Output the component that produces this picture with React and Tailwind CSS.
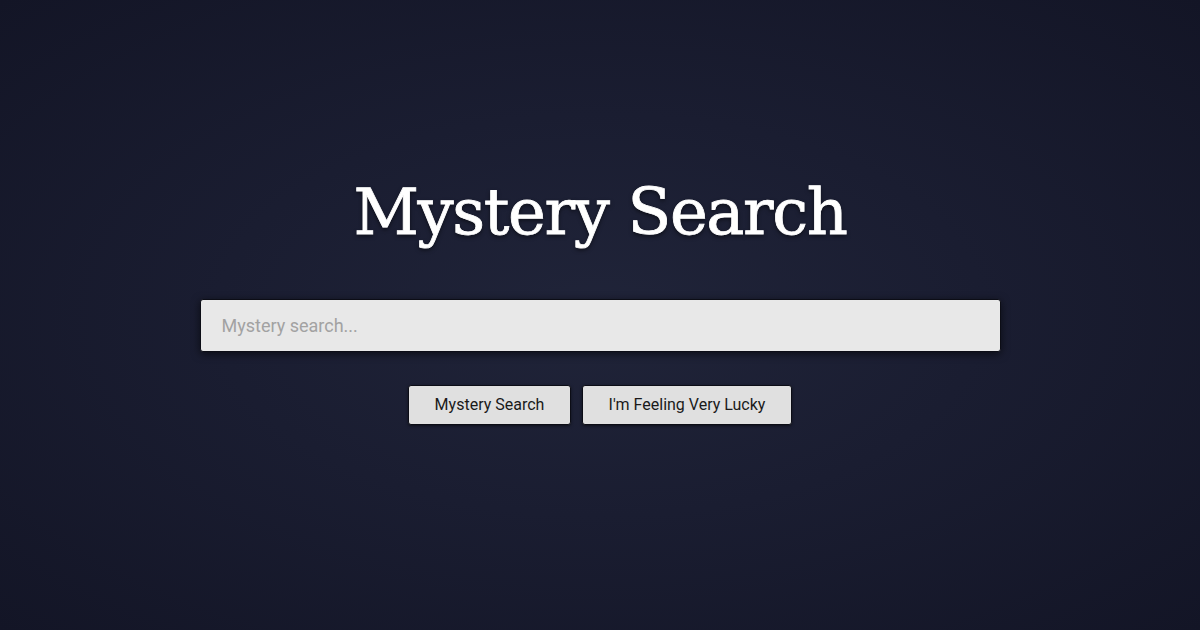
export default function App() {
  return (
    <div className="w-[1200px] h-[630px] flex flex-col items-center bg-[radial-gradient(ellipse_at_center,#202439_0%,#1a1d31_45%,#131526_100%)]">
      <h1 className="mt-[172px] text-[64px] leading-[80px] text-white [font-family:'DejaVu_Serif',serif] [text-shadow:0_2px_4px_rgba(0,0,0,0.6)] tracking-[-1.4px] [-webkit-text-stroke:0.8px_white]">
        Mystery Search
      </h1>
      <div className="mt-[47px] w-[801px] h-[53px] rounded-[3px] bg-[#e8e8e8] border border-[#0c0d16] shadow-[0_2px_8px_rgba(0,0,0,0.6)] flex items-center pl-[21px]">
        <input
          className="w-full bg-transparent outline-none text-[18px] text-[#222] placeholder:text-[#a2a2a2] [font-family:Roboto,sans-serif]"
          placeholder="Mystery search..."
        />
      </div>
      <div className="mt-[33px] flex gap-[11px] [font-family:Roboto,sans-serif]">
        <button className="w-[163px] h-[40px] rounded-[3px] bg-[#e0e0e0] border border-[#0c0d16] text-[16px] text-[#1a1a1a] shadow-[0_1px_3px_rgba(0,0,0,0.5)]">
          Mystery Search
        </button>
        <button className="w-[210px] h-[40px] rounded-[3px] bg-[#e0e0e0] border border-[#0c0d16] text-[16px] text-[#1a1a1a] shadow-[0_1px_3px_rgba(0,0,0,0.5)]">
          I'm Feeling Very Lucky
        </button>
      </div>
    </div>
  );
}
